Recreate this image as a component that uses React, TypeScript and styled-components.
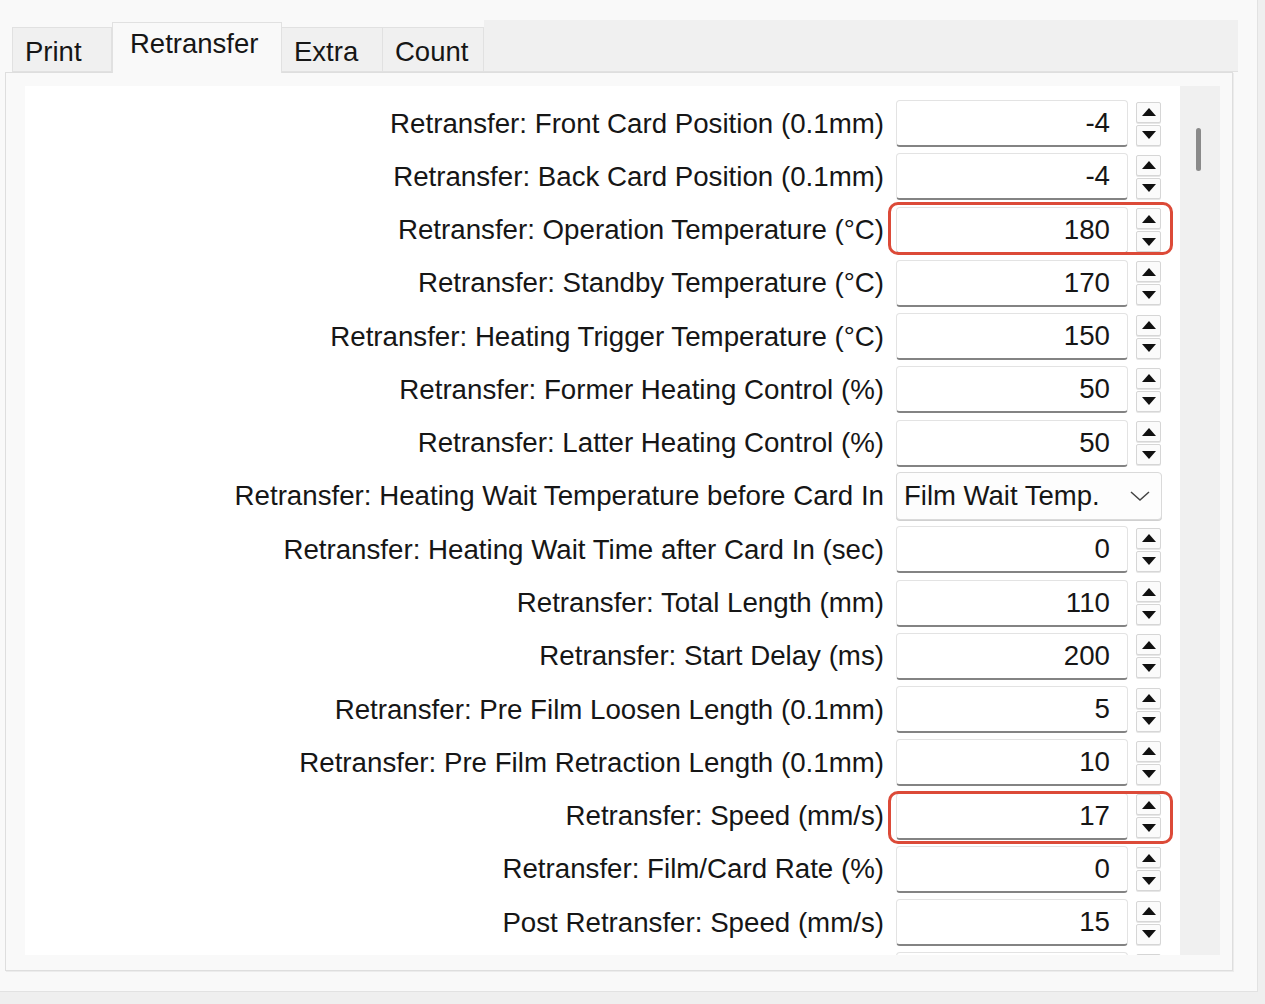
import styled, { createGlobalStyle } from "styled-components";

type Setting = {
  label: string;
  value?: string;
  choice?: string;
  mark?: number;
};

const SETTINGS: Setting[] = [
  { label: "Retransfer: Front Card Position (0.1mm)", value: "-4" },
  { label: "Retransfer: Back Card Position (0.1mm)", value: "-4" },
  { label: "Retransfer: Operation Temperature (°C)", value: "180", mark: -5 },
  { label: "Retransfer: Standby Temperature (°C)", value: "170" },
  { label: "Retransfer: Heating Trigger Temperature (°C)", value: "150" },
  { label: "Retransfer: Former Heating Control (%)", value: "50" },
  { label: "Retransfer: Latter Heating Control (%)", value: "50" },
  { label: "Retransfer: Heating Wait Temperature before Card In", choice: "Film Wait Temp." },
  { label: "Retransfer: Heating Wait Time after Card In (sec)", value: "0" },
  { label: "Retransfer: Total Length (mm)", value: "110" },
  { label: "Retransfer: Start Delay (ms)", value: "200" },
  { label: "Retransfer: Pre Film Loosen Length (0.1mm)", value: "5" },
  { label: "Retransfer: Pre Film Retraction Length (0.1mm)", value: "10" },
  { label: "Retransfer: Speed (mm/s)", value: "17", mark: -1 },
  { label: "Retransfer: Film/Card Rate (%)", value: "0" },
  { label: "Post Retransfer: Speed (mm/s)", value: "15" },
  // next row only peeks in at the bottom edge, its texts are scrolled out of view
  { label: "", value: "" },
];

const TABS = [
  { name: "Print", width: 100 },
  { name: "Retransfer", width: 170, active: true },
  { name: "Extra", width: 101 },
  { name: "Count", width: 101 },
];

const GlobalStyle = createGlobalStyle`
  * { box-sizing: border-box; }
  body {
    margin: 0;
    background: #efefef;
    font-family: "Liberation Sans", Arial, sans-serif;
    color: #161616;
  }
`;

const App = () => {
  return (
    <Screen>
      <GlobalStyle />
      <Frame>
        <TabBar>
          {TABS.map((tab) => (
            <Tab key={tab.name} $width={tab.width} $active={!!tab.active}>
              {tab.name}
            </Tab>
          ))}
          <TabFiller />
        </TabBar>
        <Pane>
          <Content>
            {SETTINGS.map((s, i) => (
              <Row key={i}>
                <Label>{s.label}</Label>
                {s.choice ? (
                  <Combo>
                    <span>{s.choice}</span>
                    <svg width="22" height="12" viewBox="0 0 22 12">
                      <polyline points="2,2 11,10 20,2" fill="none" stroke="#444" strokeWidth="1.5" />
                    </svg>
                  </Combo>
                ) : (
                  <>
                    <SpinInput>{s.value}</SpinInput>
                    <SpinButtons>
                      <SpinButton>
                        <svg width="14" height="8" viewBox="0 0 14 8">
                          <polygon points="0,8 7,0 14,8" fill="#111" />
                        </svg>
                      </SpinButton>
                      <SpinButton>
                        <svg width="14" height="8" viewBox="0 0 14 8">
                          <polygon points="0,0 14,0 7,8" fill="#111" />
                        </svg>
                      </SpinButton>
                    </SpinButtons>
                  </>
                )}
                {s.mark !== undefined && <Highlight $top={s.mark} />}
              </Row>
            ))}
          </Content>
          <ScrollTrack>
            <ScrollThumb />
          </ScrollTrack>
        </Pane>
      </Frame>
    </Screen>
  );
};

const Screen = styled.div`
  width: 1265px;
  height: 1004px;
  background: #efefef;
  overflow: hidden;
`;

const Frame = styled.div`
  width: 1258px;
  height: 992px;
  padding: 20px 0 0 5px;
  background: #f9f9f9;
  border-right: 1px solid #e2e2e2;
  border-bottom: 1px solid #e2e2e2;
`;

const TabBar = styled.div`
  display: flex;
  align-items: flex-end;
  width: 1233px;
  height: 52px;
  padding-left: 7px;
  position: relative;
  z-index: 1;
`;

const Tab = styled.div<{ $width: number; $active: boolean }>`
  width: ${(p) => p.$width}px;
  height: ${(p) => (p.$active ? 51 : 45)}px;
  margin-bottom: ${(p) => (p.$active ? -1 : 0)}px;
  display: flex;
  align-items: center;
  padding-left: ${(p) => (p.$active ? 17 : 12)}px;
  padding-top: ${(p) => (p.$active ? 0 : 4)}px;
  padding-bottom: ${(p) => (p.$active ? 8 : 0)}px;
  font-size: 27.5px;
  background: ${(p) => (p.$active ? "#f9f9f9" : "#f0f0f0")};
  border: 1px solid #e1e1e1;
  border-bottom: ${(p) => (p.$active ? "none" : "1px solid #e1e1e1")};
  border-left: ${(p) => (p.$active ? "1px solid #e1e1e1" : "none")};
  &:first-child {
    border-left: 1px solid #e1e1e1;
  }
`;

const TabFiller = styled.div`
  flex: 1;
  height: 52px;
  background: #f0f0f0;
  border-bottom: 1px solid #e1e1e1;
`;

const Pane = styled.div`
  width: 1228px;
  height: 899px;
  display: flex;
  padding: 13px 12px 15px 19px;
  background: #f9f9f9;
  border: 1px solid #dedede;
  box-shadow: 1px 1px 0 #ececec;
`;

const Content = styled.div`
  width: 1155px;
  height: 869px;
  overflow: hidden;
  background: #ffffff;
  padding-top: 11px;
`;

const Row = styled.div`
  position: relative;
  height: 53.27px;
  display: flex;
  align-items: center;
`;

const Label = styled.div`
  width: 859px;
  margin-right: 12px;
  text-align: right;
  font-size: 27.7px;
  white-space: nowrap;
`;

const SpinInput = styled.div`
  width: 232px;
  height: 47px;
  display: flex;
  align-items: center;
  justify-content: flex-end;
  padding-right: 17px;
  font-size: 27.7px;
  background: #fff;
  border: 1px solid #e3e3e3;
  border-bottom: 2px solid #838383;
  border-radius: 4px;
`;

const SpinButtons = styled.div`
  display: flex;
  flex-direction: column;
  gap: 2px;
  margin-left: 8px;
`;

const SpinButton = styled.div`
  width: 25px;
  height: 21px;
  display: flex;
  align-items: center;
  justify-content: center;
  background: #fbfbfb;
  border: 1px solid #d6d6d6;
  border-radius: 2px;
  box-shadow: 0 1px 0 #e6e6e6;
`;

const Combo = styled.div`
  width: 266px;
  height: 48px;
  display: flex;
  align-items: center;
  justify-content: space-between;
  padding: 0 10px 0 7px;
  font-size: 27.5px;
  background: #fdfdfd;
  border: 1px solid #dadada;
  border-radius: 4px;
  box-shadow: 0 1px 0 #d0d0d0;
`;

const Highlight = styled.div<{ $top: number }>`
  position: absolute;
  left: 863px;
  width: 285px;
  top: ${(p) => 3 + p.$top}px;
  height: 53px;
  border: 3px solid #dc4a38;
  border-radius: 10px;
  pointer-events: none;
`;

const ScrollTrack = styled.div`
  width: 40px;
  height: 869px;
  background: #f0f0f0;
  padding: 42px 0 0 16px;
`;

const ScrollThumb = styled.div`
  width: 5px;
  height: 43px;
  border-radius: 3px;
  background: #8a8a8a;
`;

export default App;
